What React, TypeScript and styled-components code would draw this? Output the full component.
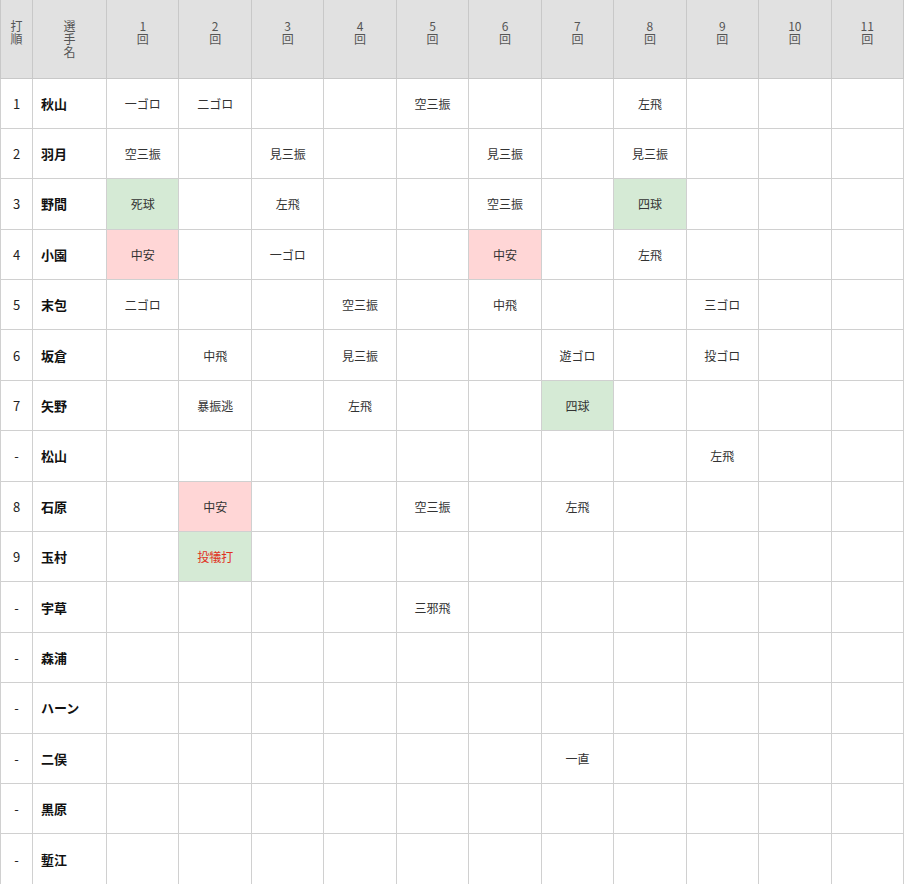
import styled, { createGlobalStyle } from 'styled-components'

// 打撃成績テーブル
type Tone = 'hit' | 'walk' | undefined

type Cell = { text: string; tone?: Tone; red?: boolean }

type Player = { order: string; name: string; results: Record<number, Cell> }

const players: Player[] = [
    { order: '1', name: '秋山', results: { 1: { text: '一ゴロ' }, 2: { text: '二ゴロ' }, 5: { text: '空三振' }, 8: { text: '左飛' } } },
    { order: '2', name: '羽月', results: { 1: { text: '空三振' }, 3: { text: '見三振' }, 6: { text: '見三振' }, 8: { text: '見三振' } } },
    { order: '3', name: '野間', results: { 1: { text: '死球', tone: 'walk' }, 3: { text: '左飛' }, 6: { text: '空三振' }, 8: { text: '四球', tone: 'walk' } } },
    { order: '4', name: '小園', results: { 1: { text: '中安', tone: 'hit' }, 3: { text: '一ゴロ' }, 6: { text: '中安', tone: 'hit' }, 8: { text: '左飛' } } },
    { order: '5', name: '末包', results: { 1: { text: '二ゴロ' }, 4: { text: '空三振' }, 6: { text: '中飛' }, 9: { text: '三ゴロ' } } },
    { order: '6', name: '坂倉', results: { 2: { text: '中飛' }, 4: { text: '見三振' }, 7: { text: '遊ゴロ' }, 9: { text: '投ゴロ' } } },
    { order: '7', name: '矢野', results: { 2: { text: '暴振逃' }, 4: { text: '左飛' }, 7: { text: '四球', tone: 'walk' } } },
    { order: '-', name: '松山', results: { 9: { text: '左飛' } } },
    { order: '8', name: '石原', results: { 2: { text: '中安', tone: 'hit' }, 5: { text: '空三振' }, 7: { text: '左飛' } } },
    { order: '9', name: '玉村', results: { 2: { text: '投犠打', tone: 'walk', red: true } } },
    { order: '-', name: '宇草', results: { 5: { text: '三邪飛' } } },
    { order: '-', name: '森浦', results: {} },
    { order: '-', name: 'ハーン', results: {} },
    { order: '-', name: '二俣', results: { 7: { text: '一直' } } },
    { order: '-', name: '黒原', results: {} },
    { order: '-', name: '塹江', results: {} },
]

const innings = Array.from({ length: 11 }, (_, i) => i + 1)

function App() {
    return (
        <>
            <GlobalStyle />
            <Table>
                <colgroup>
                    <col style={{ width: 32 }} />
                    <col style={{ width: 74 }} />
                    {innings.map((n) => (
                        <col key={n} />
                    ))}
                </colgroup>
                <thead>
                    <tr>
                        <Th>
                            打<br />順
                        </Th>
                        <Th>
                            選<br />手<br />名
                        </Th>
                        {innings.map((n) => (
                            <Th key={n}>
                                {n}
                                <br />回
                            </Th>
                        ))}
                    </tr>
                </thead>
                <tbody>
                    {players.map((p, i) => (
                        <Row key={i}>
                            <OrderCell>{p.order}</OrderCell>
                            <NameCell>{p.name}</NameCell>
                            {innings.map((n) => {
                                const c = p.results[n]
                                return (
                                    <ResultCell key={n} $tone={c?.tone} $red={c?.red}>
                                        {c?.text}
                                    </ResultCell>
                                )
                            })}
                        </Row>
                    ))}
                </tbody>
            </Table>
        </>
    )
}

const GlobalStyle = createGlobalStyle`
    body {
        margin: 0;
        background: #fff;
        font-family: "Noto Sans CJK JP", "Noto Sans", sans-serif;
    }
`

const Table = styled.table`
    width: 904px;
    table-layout: fixed;
    border-collapse: collapse;
    border-left: 1px solid #ccc;
`

const Th = styled.th`
    height: 78px;
    box-sizing: border-box;
    background: #e1e1e1;
    border: 1px solid #c8c8c8;
    border-top: 0;
    color: #555;
    font-size: 12px;
    font-weight: normal;
    line-height: 13px;
    vertical-align: top;
    padding: 19px 0 0;
    text-align: center;
`

const Row = styled.tr`
    height: 50.4px;
`

const Td = styled.td`
    border: 1px solid #d0d0d0;
    padding: 0;
    vertical-align: middle;
`

const OrderCell = styled(Td)`
    text-align: center;
    font-size: 13px;
    color: #222;
`

const NameCell = styled(Td)`
    padding-left: 8px;
    font-size: 13px;
    font-weight: bold;
    color: #111;
`

const ResultCell = styled(Td)<{ $tone?: Tone; $red?: boolean }>`
    text-align: center;
    font-size: 12px;
    color: ${(p) => (p.$red ? '#e0321e' : '#333')};
    background: ${(p) => (p.$tone === 'hit' ? '#ffd6d6' : p.$tone === 'walk' ? '#d5ead5' : '#fff')};
`

export default App
